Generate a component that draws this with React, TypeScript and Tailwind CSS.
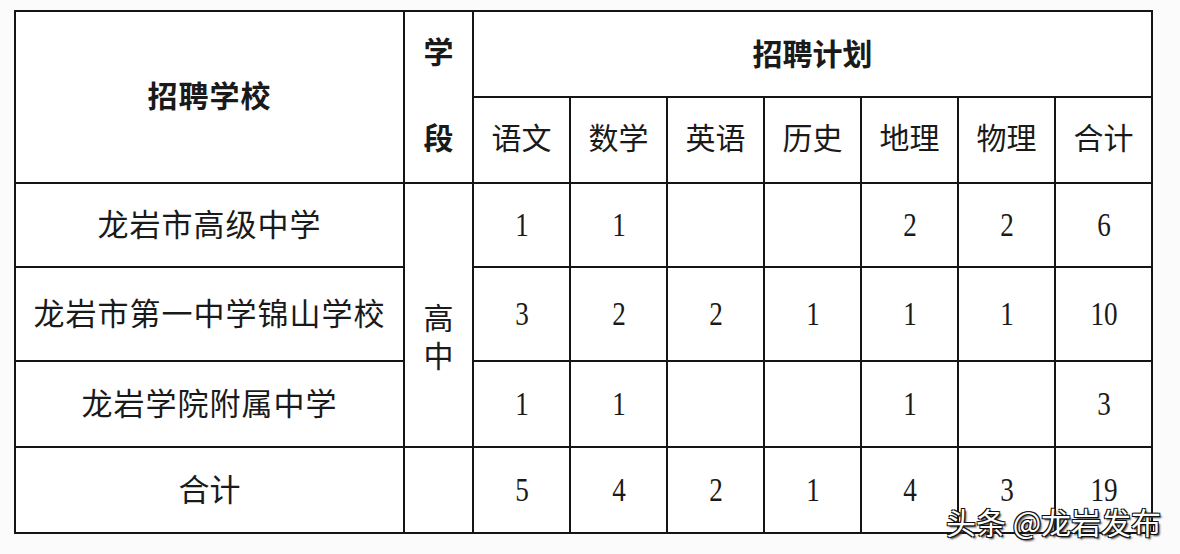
import React from "react";

const cjk = "font-['Noto_Sans_CJK_SC','Noto_Sans',sans-serif]";
const num = "font-['Liberation_Serif','Noto_Sans_CJK_SC',serif]";

const subjects = ["语文", "数学", "英语", "历史", "地理", "物理", "合计"];

const rows: { name: string; cells: string[]; h: string }[] = [
  { name: "龙岩市高级中学", cells: ["1", "1", "", "", "2", "2", "6"], h: "h-[84px]" },
  { name: "龙岩市第一中学锦山学校", cells: ["3", "2", "2", "1", "1", "1", "10"], h: "h-[94px]" },
  { name: "龙岩学院附属中学", cells: ["1", "1", "", "", "1", "", "3"], h: "h-[86px]" },
];

const totals = ["5", "4", "2", "1", "4", "3", "19"];

const td = "border-2 border-[#151515] text-center align-middle p-0";

function Num({ v }: { v: string }) {
  return (
    <span className={`${num} inline-block text-[32px] leading-none scale-x-[0.85] scale-y-[1.05] text-[#1a1a1a]`}>{v}</span>
  );
}

export default function App() {
  return (
    <div className="relative w-[1180px] h-[554px] bg-[#fbfbfb] pl-[14px] pt-[10px] overflow-hidden">
      <table className={`${cjk} table-fixed border-collapse w-[1138px] bg-white text-[#1a1a1a]`}>
        <colgroup>
          <col className="w-[389px]" />
          <col className="w-[69px]" />
          {subjects.map((s) => (
            <col key={s} className="w-[97px]" />
          ))}
        </colgroup>
        <tbody>
          <tr className="h-[86px]">
            <td rowSpan={2} className={`${td} text-[30px] font-bold tracking-[1px] pb-[6px]`}>
              招聘学校
            </td>
            <td rowSpan={2} className={`${td} text-[30px] font-bold`}>
              <div className="flex flex-col items-center justify-between h-[124px] leading-[38px] mb-[8px]">
                <span>学</span>
                <span>段</span>
              </div>
            </td>
            <td colSpan={7} className={`${td} text-[30px] font-bold pb-[4px]`}>
              招聘计划
            </td>
          </tr>
          <tr className="h-[86px]">
            {subjects.map((s) => (
              <td key={s} className={`${td} text-[30px] pb-[8px]`}>
                {s}
              </td>
            ))}
          </tr>
          {rows.map((r, i) => (
            <tr key={r.name} className={r.h}>
              <td className={`${td} text-[31px] tracking-[1px] pb-[4px]`}>{r.name}</td>
              {i === 0 && (
                <td rowSpan={3} className={`${td} text-[30px]`}>
                  <div className="flex flex-col items-center leading-[38px] pt-[40px]">
                    <span>高</span>
                    <span>中</span>
                  </div>
                </td>
              )}
              {r.cells.map((c, j) => (
                <td key={j} className={`${td} pb-[2px]`}>
                  {c && <Num v={c} />}
                </td>
              ))}
            </tr>
          ))}
          <tr className="h-[86px]">
            <td className={`${td} text-[31px] pb-[4px]`}>合计</td>
            <td className={td}></td>
            {totals.map((c, j) => (
              <td key={j} className={`${td} pb-[2px]`}>
                <Num v={c} />
              </td>
            ))}
          </tr>
        </tbody>
      </table>
      <div
        className={`${cjk} absolute left-[946px] top-[506px] text-[30px] text-white leading-none [text-shadow:1px_1px_0_#111,-1px_-1px_0_#111,1px_-1px_0_#111,-1px_1px_0_#111,2px_2px_2px_#333]`}
      >
        头条 @龙岩发布
      </div>
    </div>
  );
}
